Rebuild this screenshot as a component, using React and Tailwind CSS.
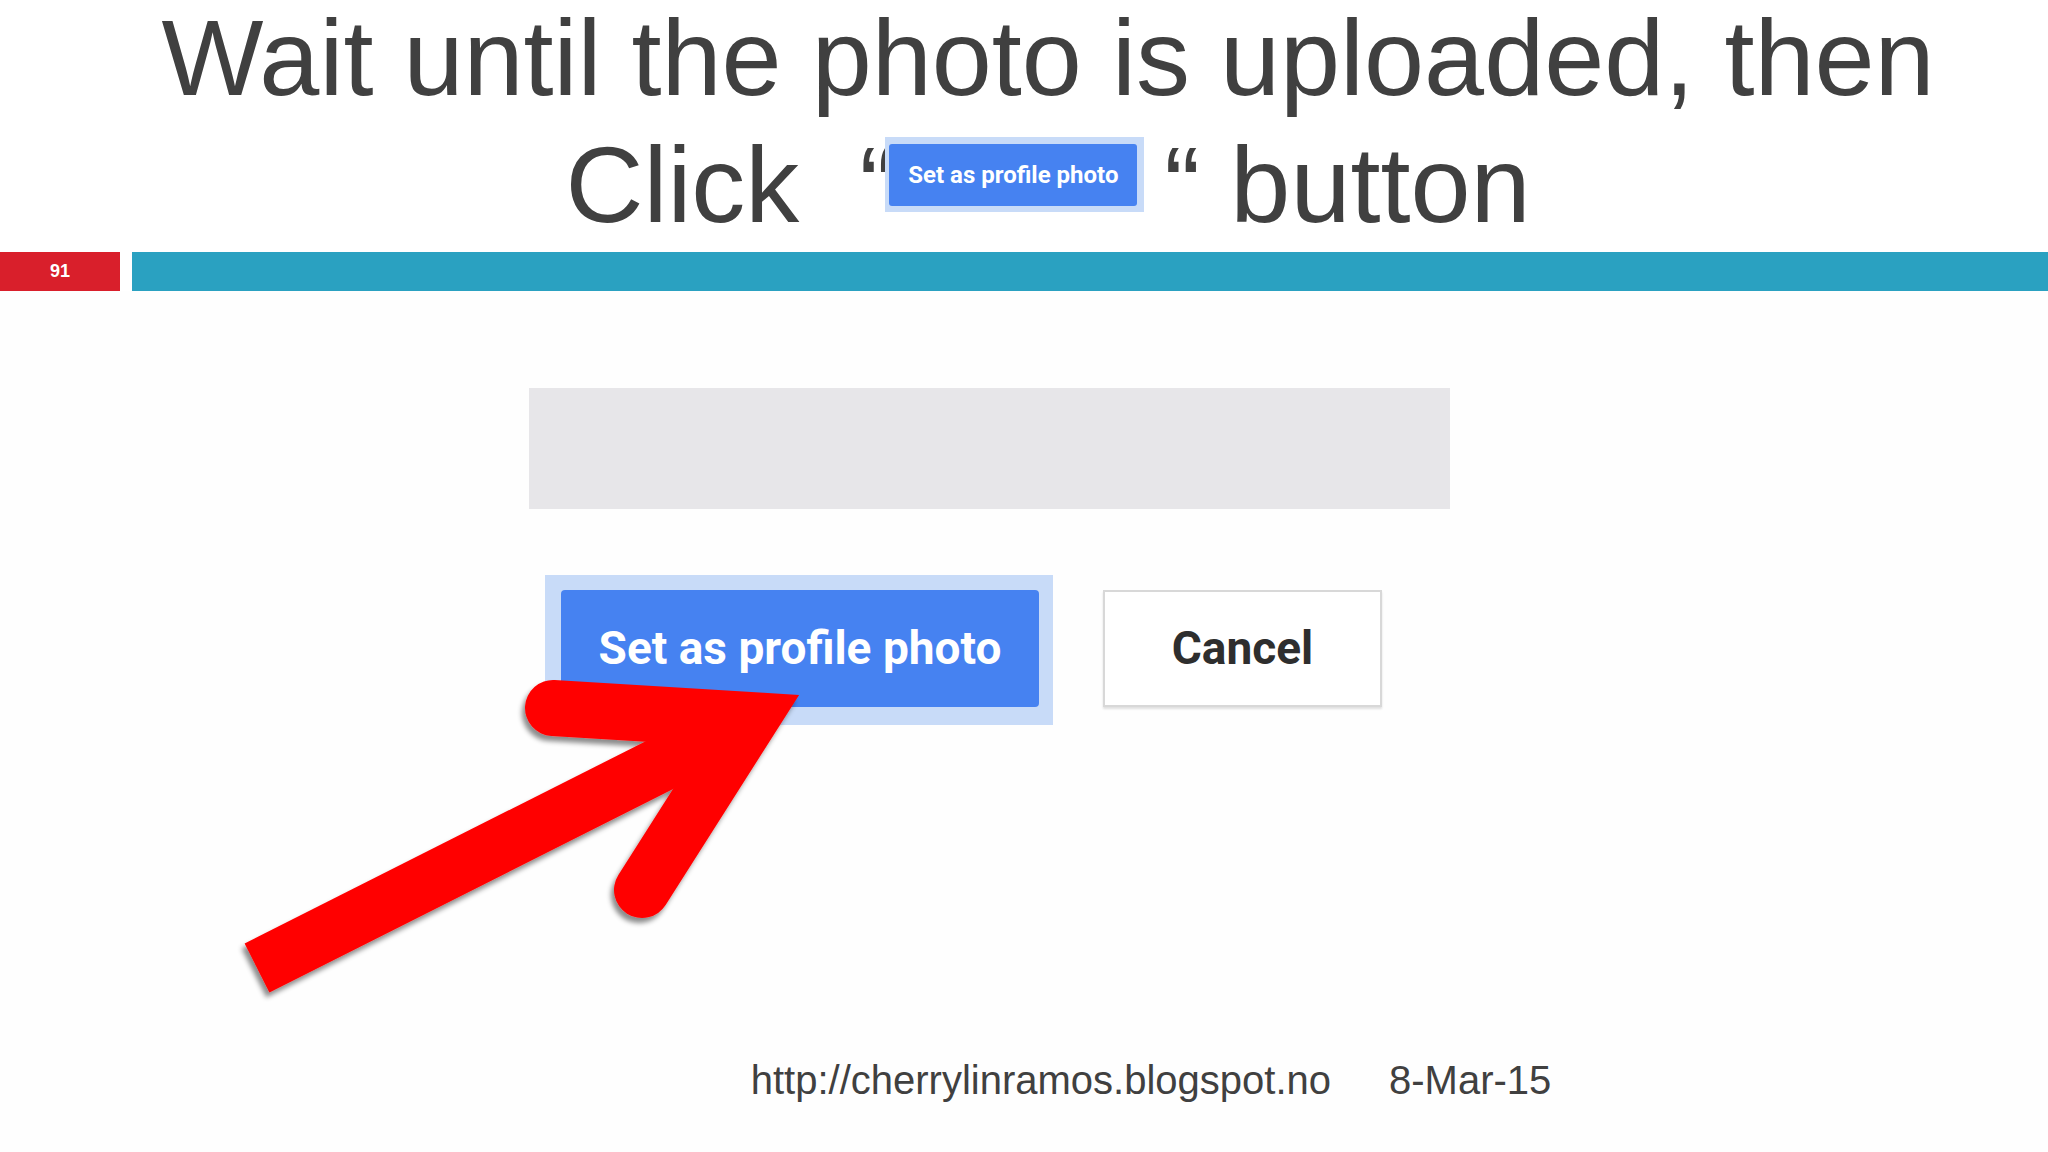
import React from "react";

function Arrow() {
  return (
    <svg
      className="absolute left-0 top-0 pointer-events-none"
      width="2048"
      height="1152"
      viewBox="0 0 2048 1152"
    >
      <defs>
        <filter id="arrowShadow" x="-20%" y="-20%" width="140%" height="140%">
          <feDropShadow dx="-3" dy="5" stdDeviation="2.5" floodColor="#000000" floodOpacity="0.45" />
        </filter>
      </defs>
      <g filter="url(#arrowShadow)">
        <line x1="257" y1="968" x2="745" y2="722" stroke="#ff0000" strokeWidth="55" />
        <path
          d="M553 708 L750 720 L642 890"
          fill="none"
          stroke="#ff0000"
          strokeWidth="56"
          strokeLinecap="round"
          strokeLinejoin="miter"
          strokeMiterlimit="10"
        />
      </g>
    </svg>
  );
}

export default function App() {
  return (
    <div className="relative w-[2048px] h-[1152px] overflow-hidden bg-[#fefefe] font-['Liberation_Sans',Arial,sans-serif]">
      {/* Title */}
      <div className="bg-white pl-[48px] pt-[1px] text-center text-[108px] text-[#404040]">
        <div className="whitespace-pre leading-[114px]">Wait until the photo is uploaded, then</div>
        <div className="mt-[6px] whitespace-pre leading-[128px]">
          {"Click  “"}
          <span className="-ml-[10px] -mr-[10px] inline-block overflow-hidden align-[10px] bg-[#c8dbf8] pl-[4px] pr-[7px] pt-[7px] pb-[6px] leading-none">
            <span className="flex h-[62px] w-[248px] items-center justify-center rounded-[3px] bg-[#4682f1] font-['Roboto',sans-serif] text-[24px] font-bold text-white">
              Set as profile photo
            </span>
          </span>
          {" “ button"}
        </div>
      </div>

      {/* Bars */}
      <div className="flex h-[42px] gap-[12px] bg-white pt-[3px]">
        <div className="flex w-[120px] items-center justify-center bg-[#d91f2b] text-[18px] font-bold text-white">
          91
        </div>
        <div className="flex-1 bg-[#2aa1c1]" />
      </div>

      {/* Screenshot content */}
      <div className="pl-[529px]">
        <div className="mt-[97px] h-[121px] w-[921px] bg-[#e7e6e9]" />
      </div>

      <div className="mt-[66px] flex items-start gap-[50px] pl-[545px]">
        <div className="bg-[#c8dbf8] pl-[16px] pr-[14px] pt-[15px] pb-[18px]">
          <div className="flex h-[117px] w-[478px] items-center justify-center rounded-[4px] bg-[#4682f1] font-['Roboto',sans-serif] text-[46px] font-bold text-white">
            Set as profile photo
          </div>
        </div>
        <div className="mt-[15px] flex h-[117px] w-[279px] items-center justify-center border-2 border-[#d8d8d8] bg-white font-['Roboto',sans-serif] text-[46px] font-bold text-[#2e2e2e] shadow-[0_2px_2px_rgba(0,0,0,0.12)]">
          Cancel
        </div>
      </div>

      {/* Footer */}
      <div className="mt-[332px] flex justify-center gap-[58px] pl-[254px] text-[40px] leading-[46px] text-[#404040]">
        <span>http://cherrylinramos.blogspot.no</span>
        <span>8-Mar-15</span>
      </div>

      <Arrow />
    </div>
  );
}
